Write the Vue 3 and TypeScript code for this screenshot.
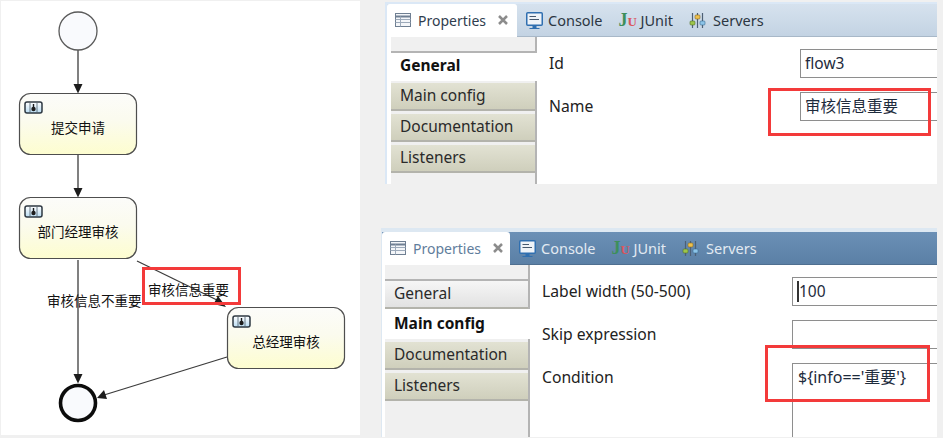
<script setup lang="ts">
interface Task {
  x: number;
  y: number;
  label: string;
}

interface Row {
  label: string;
  value: string;
  caret?: boolean;
  tall?: boolean;
}

interface Panel {
  theme: string;
  selected: string;
  rows: Row[];
}

const tasks: Task[] = [
  { x: 19, y: 94, label: "提交申请" },
  { x: 19, y: 198, label: "部门经理审核" },
  { x: 227, y: 308, label: "总经理审核" },
];

const flows = [
  "M78 50V86",
  "M78 155V190",
  "M78 260V376",
  "M137 261L219 301",
  "M227 357L104 395",
];

const arrowHeads = [
  "73.500,84 82.500,84 78,93.500",
  "73.500,188 82.500,188 78,197.500",
  "73.500,374 82.500,374 78,383.500",
  "218,296 213.500,304 226,307",
  "104,390 107,399 97,398",
];

const sections = ["General", "Main config", "Documentation", "Listeners"];

const panels: Panel[] = [
  {
    theme: "panel--first",
    selected: "General",
    rows: [
      { label: "Id", value: "flow3" },
      { label: "Name", value: "审核信息重要" },
    ],
  },
  {
    theme: "panel--second",
    selected: "Main config",
    rows: [
      { label: "Label width (50-500)", value: "100", caret: true },
      { label: "Skip expression", value: "" },
      { label: "Condition", value: "${info=='重要'}", tall: true },
    ],
  },
];
</script>

<template>
  <div class="page">
    <div class="diagram">
      <svg class="diagram__svg" viewBox="1 1 359 434" width="359" height="434">
        <defs>
          <linearGradient id="taskFill" x1="0" y1="0" x2="0" y2="1">
            <stop offset="0" stop-color="#fcfcfa" />
            <stop offset="0.45" stop-color="#fbfbee" />
            <stop offset="1" stop-color="#fdfdcf" />
          </linearGradient>
          <linearGradient id="iconFill" x1="0" y1="0" x2="0" y2="1">
            <stop offset="0" stop-color="#ffffff" />
            <stop offset="1" stop-color="#b9dcf2" />
          </linearGradient>
        </defs>

        <path v-for="flow in flows" :key="flow" class="flow" :d="flow" />
        <polygon v-for="head in arrowHeads" :key="head" class="arrow" :points="head" />

        <circle class="start" cx="78" cy="31" r="19" />
        <circle class="end" cx="78" cy="403" r="17.500" />

        <g v-for="task in tasks" :key="task.label">
          <rect class="task" :x="task.x + 0.5" :y="task.y - 0.5" width="117" height="61" rx="11" fill="url(#taskFill)" />
          <rect class="task__icon" :x="task.x + 6" :y="task.y + 8" width="17" height="11" rx="2" fill="url(#iconFill)" />
          <path class="task__bar" :d="`M${task.x + 11} ${task.y + 9}v9M${task.x + 18} ${task.y + 9}v9`" />
          <circle class="task__person" :cx="task.x + 14.500" :cy="task.y + 15" r="2.200" />
          <path class="task__neck" :d="`M${task.x + 14.500} ${task.y + 10}v3`" />
          <text class="task__label" :x="task.x + 59" :y="task.y + 39">{{ task.label }}</text>
        </g>

        <text class="flow-label" x="47" y="306">审核信息不重要</text>
        <text class="flow-label" x="148" y="295">审核信息重要</text>
        <rect class="mark" x="143.500" y="268.500" width="96" height="35" />
      </svg>
    </div>

    <div class="shots">
      <section v-for="panel in panels" :key="panel.theme" class="panel" :class="panel.theme">
        <header class="tabs">
          <div class="tab tab--active">
            <svg class="icon" viewBox="0 0 16 14" width="16" height="14">
              <rect x="0.500" y="0.500" width="15" height="13" fill="#f4f6f9" stroke="#6f7f92" />
              <path d="M0.500 3.500H15.500" stroke="#6f7f92" stroke-width="2" />
              <path d="M0.500 6.500H15.500M0.500 9.500H15.500M5.500 3.500V13.500" stroke="#9daaba" fill="none" />
            </svg>
            <span class="tab__title">Properties</span>
            <svg class="tab__close" viewBox="0 0 10 10" width="10" height="10">
              <path d="M1 1L9 9M9 1L1 9" stroke="#8c8c8c" stroke-width="2.500" />
            </svg>
          </div>
          <div class="tab tab--console">
            <svg class="icon" viewBox="0 0 17 18" width="17" height="18">
              <rect x="0.750" y="0.750" width="15.500" height="12.500" rx="1" fill="#eef3f8" stroke="#2f6fb0" stroke-width="1.500" />
              <path d="M3.500 4.500H10M3.500 7.500H13" stroke="#45586e" stroke-width="1.200" />
              <path d="M6.500 14V16H3.500V17H13.500V16H10.500V14Z" fill="#2f6fb0" />
            </svg>
            <span>Console</span>
          </div>
          <div class="tab tab--junit">
            <span class="ju"><span class="ju__j">J</span><span class="ju__u">U</span></span>
            <span>JUnit</span>
          </div>
          <div class="tab tab--servers">
            <svg class="icon" viewBox="0 0 17 17" width="17" height="17">
              <path d="M3.500 1V16M8.500 1V16M13.500 1V16" stroke="#4d6075" stroke-width="1.200" fill="none" />
              <rect x="1" y="9" width="5" height="4" rx="1" fill="#9dc54b" stroke="#50702a" stroke-width="0.600" />
              <rect x="6" y="3" width="5" height="4" rx="1" fill="#eec04c" stroke="#866a22" stroke-width="0.600" />
              <rect x="11" y="9" width="5" height="4" rx="1" fill="#8cc4e8" stroke="#3a6c90" stroke-width="0.600" />
            </svg>
            <span>Servers</span>
          </div>
        </header>

        <div class="body">
          <nav class="sections">
            <div
              v-for="section in sections"
              :key="section"
              class="section"
              :class="{ 'section--selected': section === panel.selected, 'section--before': sections.indexOf(section) < sections.indexOf(panel.selected) }"
            >
              {{ section }}
            </div>
          </nav>

          <div class="form">
            <div v-for="row in panel.rows" :key="row.label" class="row" :class="{ 'row--tall': row.tall }">
              <span class="row__label">{{ row.label }}</span>
              <div class="field">
                <span v-if="row.caret" class="field__caret"></span>{{ row.value }}
              </div>
            </div>
          </div>
        </div>

        <div class="mark-box"></div>
      </section>
    </div>
  </div>
</template>

<style>
html,
body {
  margin: 0;
  background: #f0f0f0;
}
</style>

<style scoped>
.page {
  display: flex;
  width: 943px;
  height: 438px;
  overflow: hidden;
  background: #f0f0f0;
  font-family: "Noto Sans", "Noto Sans CJK SC", sans-serif;
  color: #222;
}

.diagram {
  flex: none;
  width: 359px;
  height: 434px;
  margin: 1px 0 0 1px;
  background: #fff;
}

.diagram__svg {
  display: block;
}

.flow {
  fill: none;
  stroke: #3c3c3c;
  stroke-width: 1.300;
}

.arrow {
  fill: #1c1c1c;
}

.start {
  fill: #f9fafd;
  stroke: #5a5a5a;
  stroke-width: 1.300;
}

.end {
  fill: #f9fafd;
  stroke: #0c0c0c;
  stroke-width: 3.600;
}

.task {
  stroke: #4e4e4e;
  stroke-width: 1.200;
}

.task__icon {
  stroke: #2e3842;
  stroke-width: 1.500;
}

.task__bar {
  stroke: #4a5a68;
  stroke-width: 0.800;
}

.task__person {
  fill: #1c1c1c;
}

.task__neck {
  stroke: #1c1c1c;
  stroke-width: 1.400;
}

.task__label {
  font-size: 13.500px;
  text-anchor: middle;
  fill: #111;
}

.flow-label {
  font-size: 13.500px;
  fill: #111;
}

.mark {
  fill: none;
  stroke: #f33a3a;
  stroke-width: 3px;
}

.shots {
  display: flex;
  flex: 1;
  flex-direction: column;
  min-width: 0;
  padding-right: 6px;
}

.panel {
  position: relative;
  display: flex;
  flex-direction: column;
  overflow: hidden;
  background: #fff;
}

.panel--first {
  height: 182px;
  margin: 2px 0 0 25px;
  border-top: 2px solid #dbe8f6;
  border-left: 2px solid #dbe8f6;
  box-sizing: border-box;
}

.panel--second {
  height: 209px;
  margin: 44px 0 0 21px;
  border-top: 4px solid #dde8f2;
  border-left: 1px solid #dde8f2;
  box-sizing: border-box;
}

.tabs {
  display: flex;
  flex: none;
  align-items: center;
  height: 32px;
  font-size: 14.500px;
}

.panel--first .tabs {
  background: linear-gradient(#d6e2ee, #c3d3e3);
  border-bottom: 1px solid #a8b8c8;
  color: #2c3642;
}

.panel--second .tabs {
  background: linear-gradient(#6b90b6, #5b80a6);
  border-bottom: 1px solid #4f6f90;
  color: #e2eaf2;
}

.tab {
  display: flex;
  flex: none;
  align-items: center;
  height: 100%;
}

.tab--active {
  box-sizing: border-box;
  width: 130px;
  height: 33px;
  padding-left: 8px;
  background: #fff;
  border-radius: 3px 3px 0 0;
  font-size: 14px;
}

.panel--first .tab--active {
  color: #2f3d4e;
}

.panel--second .tab--active {
  width: 128px;
  color: #5f7d9c;
}

.tab__title {
  margin-left: 7px;
}

.tab__close {
  margin-left: 12px;
}

.tab--console {
  gap: 5px;
  margin-left: 9px;
}

.tab--console .icon {
  margin-top: 2px;
}

.tab--junit {
  gap: 4px;
  margin-left: 16px;
}

.tab--servers {
  gap: 7px;
  margin-left: 16px;
}

.icon {
  display: block;
  flex: none;
}

.ju {
  display: inline-flex;
  align-items: baseline;
  width: 18px;
  font-family: "Liberation Serif", serif;
  font-size: 18px;
  font-weight: 700;
}

.ju__j {
  color: #3d8f5a;
}

.ju__u {
  color: #d9565c;
  font-size: 13px;
}

.body {
  display: flex;
  flex: 1;
  min-height: 0;
}

.sections {
  flex: none;
  box-sizing: border-box;
  width: 146px;
  margin-left: 4px;
  padding-top: 14px;
  background: #f0f0f0;
  border-right: 2px solid #b4b4b4;
  font-size: 15.500px;
}

.panel--second .sections {
  width: 145px;
  margin-left: 3px;
}

.section {
  box-sizing: border-box;
  height: 28px;
  margin-top: 3px;
  padding-left: 9px;
  background: linear-gradient(#e2e2d3, #cfcfbc);
  border-bottom: 2px solid #b3b3ab;
  color: #2a2a2a;
  line-height: 24px;
}

.panel--first .section--selected + .section {
  margin-top: 2px;
}

.section--before {
  background: linear-gradient(#f6f6f6, #e2e2e2);
  border-top: 2px solid #b4b4b4;
  margin-top: 0;
  height: 30px;
  line-height: 25px;
}

.section--selected {
  height: 30px;
  margin-top: 0;
  margin-right: -2px;
  background: #fff;
  border-top: 2px solid #b4b4b4;
  border-bottom: 0;
  color: #111;
  font-weight: 700;
  line-height: 25px;
}

.section--before + .section--selected {
  border-top: 0;
  line-height: 29px;
}

.form {
  display: flex;
  flex: 1;
  flex-direction: column;
  gap: 14px;
  min-width: 0;
  padding: 12px 0 0 12px;
}

.row {
  display: flex;
  flex: none;
  height: 29px;
  font-size: 15.700px;
}

.row--tall {
  flex: 1;
}

.row__label {
  flex: none;
  width: 250px;
  line-height: 29px;
}

.panel--first .row__label {
  width: 251px;
  line-height: 28px;
}

.field {
  flex: 1;
  box-sizing: border-box;
  padding-left: 4px;
  border: 1px solid #8e8e8e;
  border-right: 0;
  line-height: 27px;
  font-size: 15.500px;
  color: #1e2b3c;
}

.row--tall .field {
  padding-left: 5px;
  border-bottom: 0;
  font-size: 16px;
}

.field__caret {
  display: inline-block;
  width: 2px;
  height: 21px;
  margin-right: 0;
  background: #333;
  vertical-align: -5px;
}

.mark-box {
  position: absolute;
  box-sizing: border-box;
  width: 165px;
  border: 3px solid #f33a3a;
}

.panel--first .mark-box {
  top: 84px;
  left: 381px;
  width: 163px;
  height: 48px;
}

.panel--second .mark-box {
  top: 113px;
  left: 383px;
  height: 57px;
}
</style>
